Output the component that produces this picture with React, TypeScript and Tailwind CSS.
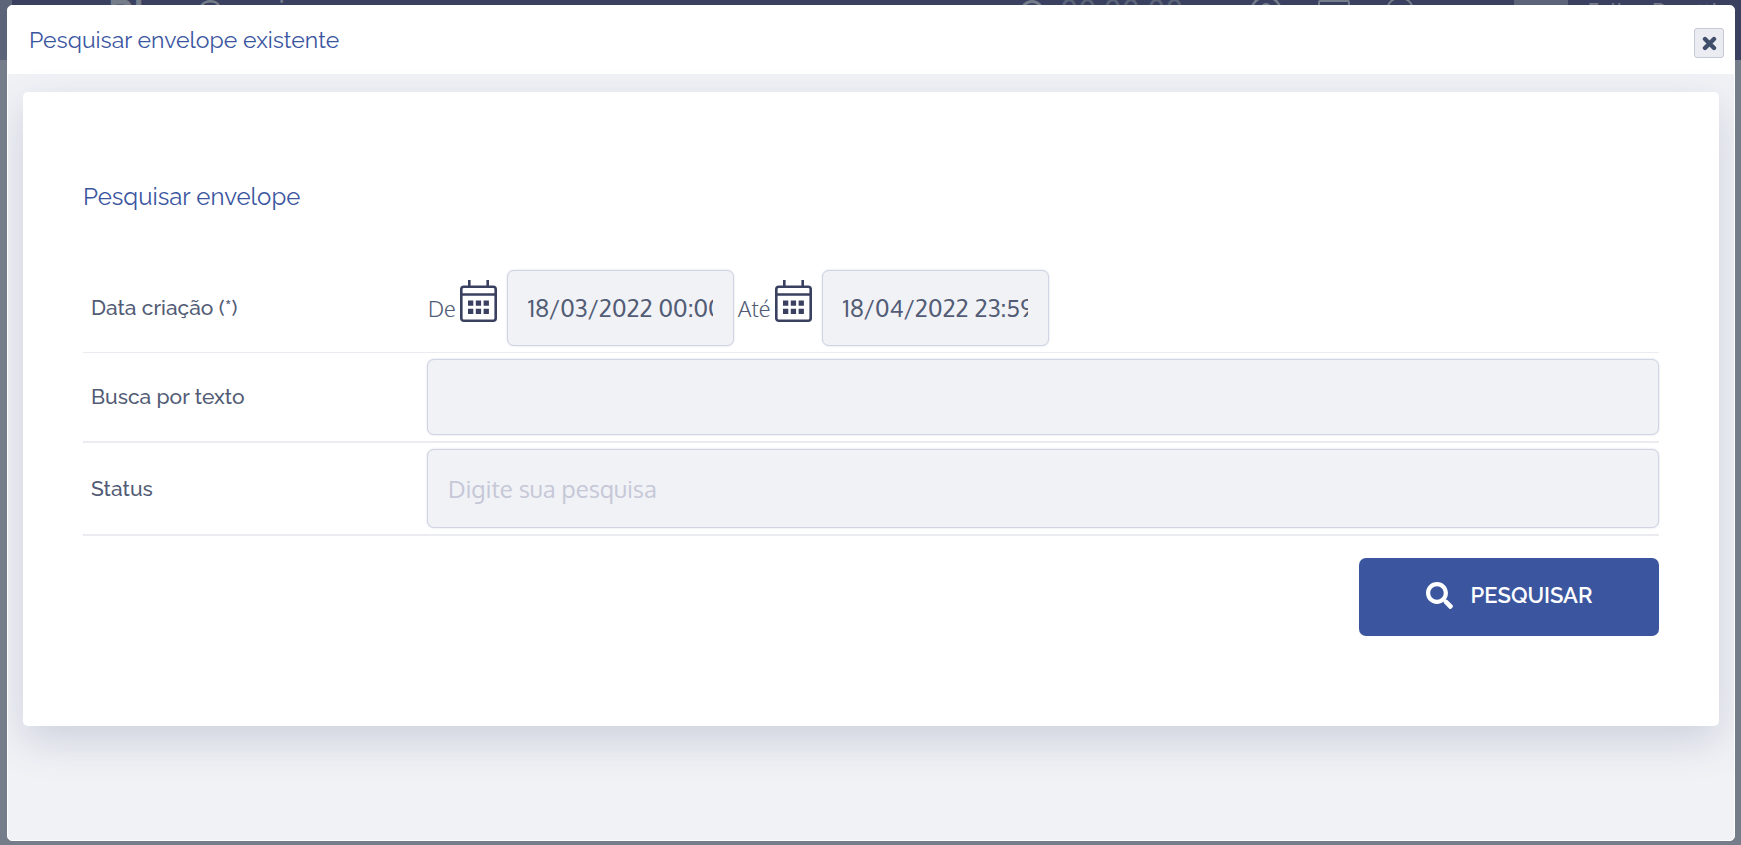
import { useId } from "react";
import type { ReactNode } from "react";
import { FaSearch } from "react-icons/fa";

const labelFont = "font-['Raleway',Lato,sans-serif]";
const inputFont = "font-['Oxygen','Noto_Sans',sans-serif]";

const fieldClass =
  "rounded-[7px] border border-[#d1d4e2] bg-[#f1f2f6] px-5 pb-px text-[24px] text-[#525c75] shadow-[0_0_2px_#d1d4e2] outline-none placeholder:text-[#c6c8d8]";

function CalendarIcon() {
  return (
    <svg viewBox="0 0 37 43" className="h-[43px] w-[37px]" fill="none" stroke="#3a4060" strokeWidth="2.6">
      <rect x="1.3" y="6.7" width="34.4" height="34" rx="2.5" />
      <path d="M1 14.500h35M9.300 0v7M27.700 0v7" />
      <path d="M8 23.200h5.300M15.800 23.200h5.300M23.600 23.200h5.300M8 31.300h5.300M15.800 31.300h5.300M23.600 31.300h5.300" strokeWidth="5.3" />
    </svg>
  );
}

function CloseIcon() {
  return (
    <svg viewBox="0 0 15 15" className="size-[15px]" stroke="#414e6b" strokeWidth="4.4" strokeLinecap="round">
      <path d="M3 3l9 9M12 3l-9 9" />
    </svg>
  );
}

function DateField({ label, name, value }: { label: string; name: string; value: string }) {
  const id = useId();
  return (
    <div className="flex items-center">
      <label htmlFor={id} className={`${inputFont} text-[22px] font-light text-[#525c75]`}>
        {label}
      </label>
      <button type="button" aria-label={`Calendário ${label}`} className="ml-1 mr-[10px] mb-[14px]">
        <CalendarIcon />
      </button>
      <input id={id} name={name} defaultValue={value} className={`${fieldClass} ${inputFont} h-[76px] w-[227px]`} />
    </div>
  );
}

function Row({ label, htmlFor, line, children }: { label: string; htmlFor?: string; line: string; children: ReactNode }) {
  return (
    <div className={`flex items-center ${line} border-[#ebecf2] py-[6px]`}>
      <label htmlFor={htmlFor} className={`${labelFont} w-[344px] shrink-0 pl-2 text-[21px] font-medium text-[#525c75]`}>
        {label}
      </label>
      {children}
    </div>
  );
}

// Dimmed top bar of the page behind the dialog
function TopBar() {
  return (
    <div className="absolute inset-x-0 top-0 flex h-15 items-start overflow-hidden bg-[#3a4060] text-[#757d8b]">
      <div className="h-full w-3 shrink-0 bg-[#5b6478]" />
      <div className={`${labelFont} ml-24 flex gap-[50px] text-[38px] leading-7`}>
        <strong>Bl</strong>
        <span>Cami</span>
      </div>
      <div className="ml-auto flex shrink-0 items-start">
        <svg viewBox="0 0 24 24" className="mr-4 size-6" fill="none" stroke="currentColor" strokeWidth="3">
          <circle cx="12" cy="12" r="10.5" />
        </svg>
        <span className={`${inputFont} mr-[66px] text-[30px] leading-5 text-[#5b6478]`}>00:00:00</span>
        <svg viewBox="0 0 32 28" className="mr-9 h-7 w-8" fill="none" stroke="currentColor" strokeWidth="2.5">
          <circle cx="16" cy="12" r="15" />
          <circle cx="16" cy="8" r="5" fill="currentColor" stroke="none" />
        </svg>
        <svg viewBox="0 0 32 28" className="mr-9 h-7 w-8" fill="none" stroke="currentColor" strokeWidth="2">
          <rect x="1" y="1" width="30" height="24" rx="1" />
        </svg>
        <svg viewBox="0 0 28 28" className="mr-[100px] size-7" fill="none" stroke="currentColor" strokeWidth="2">
          <path d="M1 10C2 -6 26 -6 27 10V22H1Z" />
        </svg>
        <div className="mr-5 h-10 w-[54px] bg-[#5b6478]" />
        <span className={`${inputFont} mr-6 text-[22px] leading-5`}>Felipe Peretti</span>
      </div>
    </div>
  );
}

export default function App() {
  return (
    <div className="relative min-h-screen bg-[#757d8b]">
      <TopBar />
      <div className="relative flex min-h-screen flex-col pt-[5px] pr-[6px] pb-1 pl-[7px]">
        <section role="dialog" aria-labelledby="dialog-title" className="flex grow flex-col overflow-hidden rounded-[5px] border border-white bg-[#f1f2f6]">
          <header className="flex h-[68px] items-center justify-between bg-white pr-[10px] pl-[21px]">
            <h1 id="dialog-title" className={`${labelFont} text-[23px] text-[#3b569f]`}>
              Pesquisar envelope existente
            </h1>
            <button
              type="button"
              aria-label="Fechar"
              className="mt-[6px] flex size-[30px] items-center justify-center rounded-[3px] border border-[#c6c8d8] bg-[#ebecf2]"
            >
              <CloseIcon />
            </button>
          </header>

          <main className="mx-[15px] mt-[18px] rounded-[5px] bg-white px-15 pt-[87px] pb-[90px] shadow-[0_15px_40px_rgba(60,80,120,0.2)]">
            <h2 className={`${labelFont} text-[24px] leading-9 text-[#3b569f]`}>Pesquisar envelope</h2>

            <form className="mt-[49px]" onSubmit={(e) => e.preventDefault()}>
              <Row label="Data criação (*)" line="border-b">
                <div className="flex gap-1 pl-px">
                  <DateField label="De" name="start" value="18/03/2022 00:00" />
                  <DateField label="Até" name="end" value="18/04/2022 23:59" />
                </div>
              </Row>
              <Row label="Busca por texto" htmlFor="text" line="border-b-2">
                <input id="text" className={`${fieldClass} ${inputFont} h-[76px] min-w-0 grow`} />
              </Row>
              <Row label="Status" htmlFor="status" line="border-b-2">
                <input id="status" placeholder="Digite sua pesquisa" className={`${fieldClass} ${inputFont} h-[79px] min-w-0 grow`} />
              </Row>
              <div className="mt-[22px] flex justify-end">
                <button
                  type="submit"
                  className={`${labelFont} flex h-[78px] w-[300px] items-center justify-center gap-[18px] rounded-[7px] bg-[#3b569f] pb-[3px] text-[22px] font-semibold text-white`}
                >
                  <FaSearch size={27} />
                  PESQUISAR
                </button>
              </div>
            </form>
          </main>
        </section>
      </div>
    </div>
  );
}
